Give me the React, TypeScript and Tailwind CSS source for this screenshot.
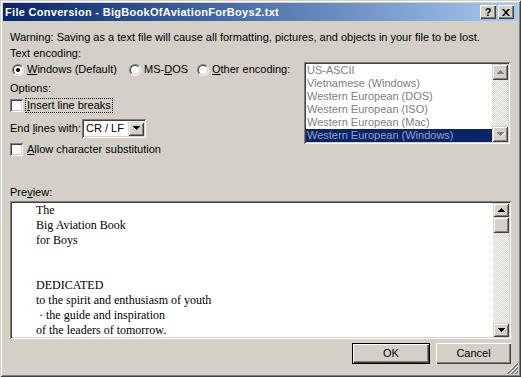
import React from "react";

const font = "font-['Liberation_Sans',Arial,sans-serif]";
const sunken =
  "shadow-[inset_1px_1px_#808080,inset_-1px_-1px_#ffffff,inset_2px_2px_#404040,inset_-2px_-2px_#d4d0c8]";
const raised =
  "shadow-[inset_1px_1px_#d4d0c8,inset_-1px_-1px_#404040,inset_2px_2px_#ffffff,inset_-2px_-2px_#808080]";
const pushed =
  "shadow-[inset_1px_1px_#ffffff,inset_-1px_-1px_#404040,inset_-2px_-2px_#808080]";

const encodings = [
  "US-ASCII",
  "Vietnamese (Windows)",
  "Western European (DOS)",
  "Western European (ISO)",
  "Western European (Mac)",
  "Western European (Windows)",
];

const previewLines = [
  "The",
  "Big Aviation Book",
  "for Boys",
  "",
  "",
  "DEDICATED",
  "to the spirit and enthusiasm of youth",
  "\u00a0· the guide and inspiration",
  "of the leaders of tomorrow.",
];

const Radio = ({ checked }: { checked?: boolean }) => (
  <div className="w-[12px] h-[12px] rounded-full border border-t-[#808080] border-l-[#808080] border-b-white border-r-white shrink-0">
    <div className="w-full h-full rounded-full border border-t-[#404040] border-l-[#404040] border-b-[#d4d0c8] border-r-[#d4d0c8] bg-white flex items-center justify-center">
      {checked && <div className="w-[4px] h-[4px] rounded-full bg-black" />}
    </div>
  </div>
);

const Checkbox = () => <div className={`w-[13px] h-[13px] bg-white shrink-0 ${sunken}`} />;

const Arrow = ({ up, disabled }: { up?: boolean; disabled?: boolean }) => (
  <svg width="7" height="5" viewBox="0 0 7 5" className="overflow-visible">
    {disabled && (
      <path d={up ? "M4 1h1v1h1v1h1v1H1V3h1V2h1V1z" : "M1 1h7v1H7v1H6v1H5v1H4V4H3V3H2V2H1z"} fill="#ffffff" />
    )}
    <path
      d={up ? "M3 0h1v1h1v1h1v1h1v1H0V3h1V2h1V1h1z" : "M0 0h7v1H6v1H5v1H4v1H3V3H2V2H1V1H0z"}
      fill={disabled ? "#808080" : "#000000"}
    />
  </svg>
);

const ScrollBtn = ({ up, disabled, h = 16 }: { up?: boolean; disabled?: boolean; h?: number }) => (
  <div
    className={`w-[16px] bg-[#d4d0c8] flex items-center justify-center shrink-0 ${raised} ${h === 16 ? "h-[16px]" : "h-[14px]"}`}
  >
    <Arrow up={up} disabled={disabled} />
  </div>
);

const checker = "[background:repeating-conic-gradient(#d4d0c8_0_25%,#ffffff_0_50%)_0_0/2px_2px]";

export default function App() {
  return (
    <div
      className={`w-[521px] h-[377px] bg-[#d4d0c8] p-[3px] flex flex-col relative text-[11px] leading-[13px] text-black ${font} shadow-[inset_1px_1px_#d4d0c8,inset_-1px_-1px_#404040,inset_2px_2px_#ffffff,inset_-2px_-2px_#808080]`}
    >
      {/* title bar */}
      <div className="h-[18px] bg-linear-to-r from-[#0a246a] to-[#a6caf0] flex items-center pl-[2px] pr-[4px]">
        <span className="text-white font-bold flex-1 tracking-[0.3px]">File Conversion - BigBookOfAviationForBoys2.txt</span>
        <div className={`w-[16px] h-[14px] bg-[#d4d0c8] flex items-center justify-center font-bold ${pushed}`}>?</div>
        <div className={`w-[16px] h-[14px] bg-[#d4d0c8] ml-[2px] flex items-center justify-center ${pushed}`}>
          <svg width="8" height="7" viewBox="0 0 8 7">
            <path d="M0 0h2l2 2.2L6 0h2L5 3.5 8 7H6L4 4.8 2 7H0l3-3.5z" fill="#000" />
          </svg>
        </div>
      </div>

      <div className="flex flex-col pl-[7px] pr-[7px]">
        <div className="mt-[10px] h-[13px]">
          Warning: Saving as a text file will cause all formatting, pictures, and objects in your file to be lost.
        </div>

        <div className="flex">
          <div className="flex-1 flex flex-col">
            <div className="mt-[3px] h-[13px]">Text encoding:</div>
            <div className="mt-[3px] h-[13px] flex items-center">
              <div className="w-[119px] flex items-center">
                <div className="ml-[2px]">
                  <Radio checked />
                </div>
                <span className="ml-[3px]">
                  <u>W</u>indows (Default)
                </span>
              </div>
              <div className="w-[68px] flex items-center">
                <Radio />
                <span className="ml-[3px]">
                  MS-<u>D</u>OS
                </span>
              </div>
              <div className="flex items-center">
                <Radio />
                <span className="ml-[3px]">
                  <u>O</u>ther encoding:
                </span>
              </div>
            </div>
            <div className="mt-[6px] h-[13px]">Options:</div>
            <div className="mt-[2px] h-[16px] flex items-center">
              <Checkbox />
              <span className="ml-[2px] px-[1px] border border-dotted border-black leading-[13px]">
                <u>I</u>nsert line breaks
              </span>
            </div>
            <div className="mt-[6px] h-[19px] flex items-center">
              <span className="w-[72px]">
                End <u>l</u>ines with:
              </span>
              <div className={`w-[64px] h-[19px] bg-white flex items-center p-[2px] ${sunken}`}>
                <span className="flex-1 pl-[2px]">CR / LF</span>
                <ScrollBtn h={14} />
              </div>
            </div>
            <div className="mt-[4px] h-[15px] flex items-center">
              <Checkbox />
              <span className="ml-[4px]">
                <u>A</u>llow character substitution
              </span>
            </div>
          </div>

          <div className={`w-[206px] h-[82px] mt-[18px] mr-[1px] bg-white p-[2px] flex ${sunken}`}>
            <div className="flex-1 flex flex-col overflow-hidden">
              {encodings.map((e, i) => (
                <div
                  key={e}
                  className={`h-[13px] pl-[1px] shrink-0 ${i === encodings.length - 1 ? "bg-[#0a246a] text-[#94a0c4]" : "text-[#808080]"}`}
                >
                  {e}
                </div>
              ))}
            </div>
            <div className="w-[16px] flex flex-col">
              <ScrollBtn up disabled />
              <div className={`flex-1 ${checker}`} />
              <ScrollBtn disabled />
            </div>
          </div>
        </div>

        <div className="mt-[29px] h-[13px]">
          Pre<u>v</u>iew:
        </div>
        <div className={`mt-[2px] h-[138px] bg-white p-[2px] flex ${sunken}`}>
          <div className="flex-1 pl-[24px] font-['Liberation_Serif','Times_New_Roman',serif] text-[12px] leading-[15px]">
            {previewLines.map((l, i) => (
              <div key={i} className="h-[15px] whitespace-pre">
                {l}
              </div>
            ))}
          </div>
          <div className="w-[16px] flex flex-col">
            <ScrollBtn up h={14} />
            <div className={`w-[16px] h-[16px] bg-[#d4d0c8] ${raised}`} />
            <div className={`flex-1 ${checker}`} />
            <ScrollBtn h={14} />
          </div>
        </div>

        <div className="mt-[4px] flex justify-end gap-[6px]">
          <div className="w-[78px] h-[21px] border border-black">
            <div className={`w-full h-full bg-[#d4d0c8] flex items-center justify-center ${pushed}`}>OK</div>
          </div>
          <div className={`w-[75px] h-[21px] bg-[#d4d0c8] flex items-center justify-center ${pushed}`}>Cancel</div>
        </div>
      </div>

      {/* size grip */}
      <svg className="absolute right-[3px] bottom-[3px]" width="12" height="12" viewBox="0 0 12 12">
        <path d="M11 1L1 11M11 5L5 11M11 9L9 11" stroke="#ffffff" strokeWidth="1" />
        <path d="M12 1L1 12M12 2L2 12M12 5L5 12M12 6L6 12M12 9L9 12M12 10L10 12" stroke="#808080" strokeWidth="1" />
      </svg>
    </div>
  );
}
